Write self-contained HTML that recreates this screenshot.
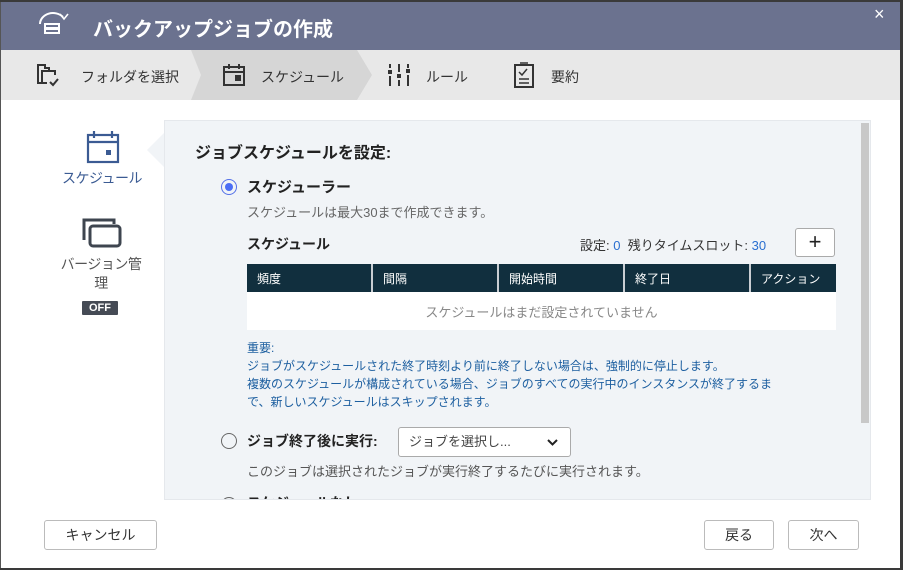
<!DOCTYPE html>
<html><head><meta charset="utf-8"><style>
*{margin:0;padding:0;box-sizing:border-box}
body{width:903px;height:570px;background:#3a3a3a;position:relative;overflow:hidden;font-family:"Liberation Sans","Noto Sans CJK JP",sans-serif;color:#222}
.a{position:absolute;white-space:nowrap}
#dlg{position:absolute;left:0;top:2px;width:900px;height:566px;background:#fff;border-left:1px solid #555;overflow:hidden}
#hdr{position:absolute;left:0;top:0;width:900px;height:48px;background:#6b728f}
#steps{position:absolute;left:0;top:48px;width:900px;height:50px;background:#e8e8e8}
.st{font-size:14px;color:#333;top:17px}
#panel{position:absolute;left:163px;top:118px;width:707px;height:380px;background:#f1f4f7;border:1px solid #e5e8ec;overflow:hidden}
.btn{position:absolute;border:1px solid #bbb;border-radius:3px;background:#fff;font-size:14px;text-align:center;line-height:28px;height:30px;color:#333}
th{background:#112f3e;color:#fff;font-size:12px;font-weight:normal;text-align:left;padding-left:10px;height:28px;border-right:2px solid #c9ced3}
</style></head><body>
<div id="dlg">
<div id="hdr">
 <svg class="a" style="left:36px;top:9px" width="34" height="26" viewBox="0 0 34 26" fill="none" stroke="#fff" stroke-width="2"><path d="M3 13 A13 11 0 0 1 26 6"/><path d="M23 3 L27 8 L31 3" stroke-width="1.6"/><rect x="8" y="13" width="14" height="4"/><rect x="8" y="18" width="14" height="4"/></svg>
 <div class="a" style="left:92px;top:11px;color:#fff;font-size:20px;font-weight:bold">バックアップジョブの作成</div>
 <div class="a" style="left:873px;top:2px;color:#fff;font-size:18px">×</div>
</div>
<div id="steps">
 <svg class="a" style="left:188px;top:0" width="190" height="50"><polygon points="2,0 168,0 183,25 168,50 2,50 12,25" fill="#d6d6d6"/></svg>
 <svg class="a" style="left:36px;top:13px" width="30" height="26" fill="none" stroke="#333" stroke-width="2"><path d="M1 2h7v3h4v3H5v12H1z"/><path d="M5 8h13v4"/><path d="M10 20H5"/><path d="M13 19l3 3 5-6"/></svg>
 <div class="a st" style="left:80px">フォルダを選択</div>
 <svg class="a" style="left:221px;top:13px" width="24" height="24" fill="none" stroke="#333" stroke-width="2"><rect x="2" y="4" width="20" height="18"/><path d="M2 9h20M7 1v5M17 1v5"/><rect x="14" y="13" width="4" height="4" fill="#333"/></svg>
 <div class="a st" style="left:260px">スケジュール</div>
 <svg class="a" style="left:387px;top:14px" width="24" height="22" fill="#333"><rect x="1" y="0" width="2" height="4"/><rect x="0" y="6" width="4" height="4"/><rect x="1" y="12" width="2" height="10"/><rect x="10" y="0" width="2" height="8"/><rect x="9" y="10" width="4" height="4"/><rect x="10" y="16" width="2" height="6"/><rect x="19" y="0" width="2" height="4"/><rect x="18" y="5" width="4" height="4"/><rect x="19" y="11" width="2" height="11"/></svg>
 <div class="a st" style="left:425px">ルール</div>
 <svg class="a" style="left:512px;top:12px" width="22" height="26" fill="none" stroke="#333" stroke-width="2"><rect x="2" y="3" width="18" height="22"/><path d="M7 1h8M6 10l3 3 5-6M6 17h10M6 21h10" stroke-width="1.5"/></svg>
 <div class="a st" style="left:550px">要約</div>
</div>
<!-- sidebar -->
<svg class="a" style="left:85px;top:128px" width="34" height="34" fill="none" stroke="#3b5b93" stroke-width="2.2"><rect x="2" y="5" width="30" height="27"/><path d="M2 12h30M8 1v7M26 1v7"/><rect x="20" y="20" width="5" height="5" fill="#3b5b93" stroke="none"/></svg>
<div class="a" style="left:61px;top:166px;font-size:14px;color:#3b5b93;letter-spacing:-0.5px">スケジュール</div>
<svg class="a" style="left:81px;top:214px" width="40" height="32" fill="none" stroke="#3e454f" stroke-width="3"><path d="M2 24V4h30v4"/><rect x="8" y="10" width="30" height="20" rx="3"/></svg>
<div class="a" style="left:50px;top:253px;font-size:14px;color:#555;text-align:center;width:100px;line-height:19px;letter-spacing:-0.5px">バージョン管<br>理</div>
<div class="a" style="left:81px;top:299px;width:36px;height:14px;background:#454b55;color:#fff;font-size:11px;font-weight:bold;text-align:center;line-height:14px;border-radius:1px">OFF</div>
<svg class="a" style="left:146px;top:130px" width="18" height="36"><polygon points="18,0 0,18 18,36" fill="#f1f4f7"/></svg>
<div id="panel">
 <div class="a" style="left:30px;top:18px;font-size:16px;font-weight:bold">ジョブスケジュールを設定:</div>
 <div class="a" style="left:56px;top:58px;width:16px;height:16px;border:1.5px solid #5571e8;border-radius:50%"><div style="margin:2.5px;width:8px;height:8px;border-radius:50%;background:#4c6ef5"></div></div>
 <div class="a" style="left:82px;top:55px;font-size:15px;font-weight:bold">スケジューラー</div>
 <div class="a" style="left:82px;top:81px;font-size:13px;color:#666">スケジュールは最大30まで作成できます。</div>
 <div class="a" style="left:82px;top:113px;font-size:14px;font-weight:bold">スケジュール</div>
 <div class="a" style="left:415px;top:114px;font-size:13px;color:#333">設定: <span style="color:#2a6fd0">0</span>&nbsp; 残りタイムスロット: <span style="color:#2a6fd0">30</span></div>
 <div class="a" style="left:630px;top:107px;width:40px;height:29px;border:1px solid #aaa;border-radius:3px;background:#fff;text-align:center;font-size:22px;line-height:26px">+</div>
 <table class="a" style="left:82px;top:143px;width:589px;border-collapse:collapse"><tr><th style="width:125px">頻度</th><th style="width:126px">間隔</th><th style="width:126px">開始時間</th><th style="width:126px">終了日</th><th style="border-right:0">アクション</th></tr>
 <tr><td colspan="5" style="background:#fff;height:38px;text-align:center;font-size:13px;color:#888">スケジュールはまだ設定されていません</td></tr></table>
 <div class="a" style="left:82px;top:218px;font-size:12px;color:#1d5fa0;line-height:18px">重要:<br>ジョブがスケジュールされた終了時刻より前に終了しない場合は、強制的に停止します。<br>複数のスケジュールが構成されている場合、ジョブのすべての実行中のインスタンスが終了するま<br>で、新しいスケジュールはスキップされます。</div>
 <div class="a" style="left:56px;top:312px;width:16px;height:16px;border:1.5px solid #666;border-radius:50%"></div>
 <div class="a" style="left:82px;top:310px;font-size:14px;font-weight:bold">ジョブ終了後に実行:</div>
 <div class="a" style="left:233px;top:306px;width:173px;height:30px;border:1px solid #aaa;border-radius:3px;background:#fff;font-size:13px;line-height:28px;padding-left:10px;color:#444">ジョブを選択し...<svg style="position:absolute;right:12px;top:11px" width="11" height="7" fill="none" stroke="#222" stroke-width="2"><path d="M1 1l4.5 4.5L10 1"/></svg></div>
 <div class="a" style="left:82px;top:340px;font-size:13px;color:#555">このジョブは選択されたジョブが実行終了するたびに実行されます。</div>
 <div class="a" style="left:56px;top:376px;width:16px;height:16px;border:1.5px solid #666;border-radius:50%"></div>
 <div class="a" style="left:82px;top:372px;font-size:14px;font-weight:bold">スケジュールなし</div>
 <div class="a" style="left:696px;top:2px;width:8px;height:300px;background:#c8c8c8"></div>
</div>
<div class="btn" style="left:43px;top:518px;width:113px">キャンセル</div>
<div class="btn" style="left:703px;top:518px;width:70px">戻る</div>
<div class="btn" style="left:787px;top:518px;width:71px">次へ</div>
</div>
</body></html>
